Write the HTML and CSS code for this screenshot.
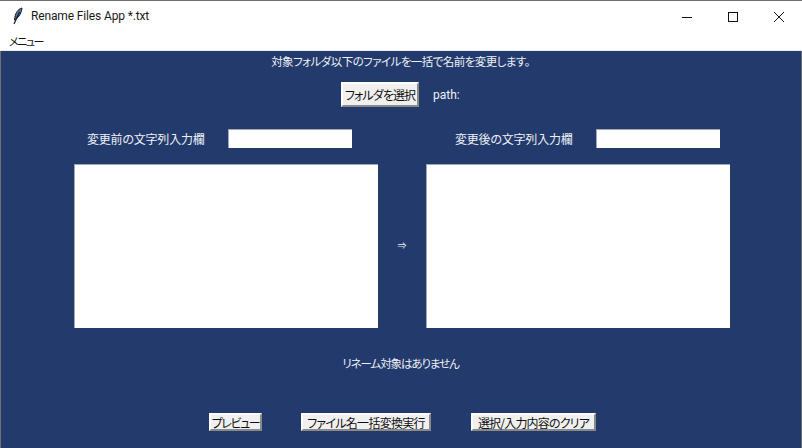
FILE: index.html
```html
<!DOCTYPE html>
<html lang="ja">
<head>
    <meta charset="UTF-8">
    <meta name="viewport" content="width=device-width, initial-scale=1.0">
    <title>Rename Files App *.txt</title>
    <link rel="stylesheet" href="styles.css">
</head>
<body>
    <div class="window">
        <div class="titlebar">
            <svg class="app-icon" width="16" height="20" viewBox="0 0 16 20">
                <path d="M12 2C8 3 5.500 7 5 11L4.500 14L6.500 12.500C9 11 11.500 7 12 2Z" fill="#5d7898" stroke="#111827" stroke-width="1"/>
                <path d="M9.500 6L4 18" stroke="#111827" stroke-width="1.200" fill="none"/>
            </svg>
            <span class="app-title">Rename Files App *.txt</span>
            <div class="window-controls">
                <svg width="12" height="12" viewBox="0 0 12 12"><path d="M1 6.500H11" stroke="#111" fill="none"/></svg>
                <svg width="12" height="12" viewBox="0 0 12 12"><rect x="1.500" y="1.500" width="9" height="9" stroke="#111" fill="none"/></svg>
                <svg width="12" height="12" viewBox="0 0 12 12"><path d="M1 1L11 11M11 1L1 11" stroke="#111" fill="none"/></svg>
            </div>
        </div>
        <div class="menubar">メニュー</div>

        <main class="content">
            <p class="lead">対象フォルダ以下のファイルを一括で名前を変更します。</p>

            <div class="folder-row">
                <button class="btn btn-folder">フォルダを選択</button>
                <span class="path-label">path:</span>
            </div>

            <div class="columns">
                <div class="input-row">
                    <label class="field-label">変更前の文字列入力欄</label>
                    <input class="field" type="text">
                </div>
                <div class="input-row">
                    <label class="field-label">変更後の文字列入力欄</label>
                    <input class="field" type="text">
                </div>
            </div>

            <div class="lists">
                <div class="listbox"></div>
                <span class="arrow">⇒</span>
                <div class="listbox"></div>
            </div>

            <p class="status">リネーム対象はありません</p>

            <div class="actions">
                <button class="btn btn-small">プレビュー</button>
                <button class="btn btn-small">ファイル名一括変換実行</button>
                <button class="btn btn-small">選択/入力内容のクリア</button>
            </div>
        </main>
    </div>
</body>
</html>
```

FILE: styles.css
```css
html {
    box-sizing: border-box;
}

*, *::before, *::after {
    box-sizing: inherit;
}

body {
    margin: 0;
    background: #233a6c;
    font-family: "Noto Sans CJK JP", "Liberation Sans", sans-serif;
    font-size: 12px;
    font-feature-settings: "palt" 1;
    overflow: hidden;
}

.window {
    width: 802px;
    height: 448px;
    display: flex;
    flex-direction: column;
    border-left: 1px solid #6f6f6f;
    border-right: 1px solid #6f6f6f;
}

.titlebar {
    height: 31px;
    flex: none;
    display: flex;
    align-items: center;
    background: white;
    border-top: 1px solid #6f6f6f;
    margin: 0 -1px;
    padding-left: 10px;
}

.app-icon {
    margin-right: 5px;
}

.app-title {
    font-family: Roboto, "Liberation Sans", sans-serif;
    font-size: 12px;
    letter-spacing: -0.14px;
    color: #1a1a1a;
}

.window-controls {
    margin-left: auto;
    display: flex;
    gap: 34px;
    padding-right: 17px;
    padding-top: 1px;
}

.window-controls svg {
    display: block;
}

.menubar {
    height: 20px;
    flex: none;
    background: white;
    border-bottom: 1px solid #e9edf7;
    margin: 0 -1px;
    padding-left: 9px;
    line-height: 20px;
    font-size: 11px;
    letter-spacing: -1.5px;
    color: #111;
}

.content {
    flex: 1;
    display: flex;
    flex-direction: column;
    align-items: center;
    color: #eef1f6;
    margin-left: -1px;
}

.lead {
    margin: 1px 0 0;
    height: 18px;
    line-height: 18px;
    font-size: 11.5px;
    letter-spacing: -0.55px;
}

.folder-row {
    margin-top: 12px;
    height: 25px;
    width: 100%;
    padding-left: 341px;
    display: flex;
    align-items: center;
}

.path-label {
    margin-left: 14px;
    font-family: Roboto, sans-serif;
}

.btn {
    background: #f0f0f0;
    color: #111;
    font-family: inherit;
    font-size: 12px;
    font-feature-settings: "palt" 1;
    padding: 0;
    border: 2px solid;
    border-color: #ffffff #8a8a8a #8a8a8a #ffffff;
    white-space: nowrap;
}

.btn-folder {
    width: 78px;
    height: 25px;
    letter-spacing: -0.9px;
}

.columns {
    margin-top: 22px;
    width: 100%;
    display: flex;
    height: 19px;
}

.input-row {
    flex: none;
    display: flex;
    align-items: center;
    width: 368px;
}

.input-row:first-child {
    margin-left: 87px;
}

.input-row:last-child {
    width: 265px;
}

.field-label {
    width: 141px;
    letter-spacing: -0.2px;
}

.field {
    width: 124px;
    height: 19px;
    background: white;
    border: none;
    border-top: 1px solid #a0a6b4;
    border-left: 1px solid #a0a6b4;
}

.lists {
    margin-top: 16px;
    width: 100%;
    padding-left: 74px;
    display: flex;
    align-items: center;
}

.listbox {
    width: 304px;
    height: 164px;
    background: white;
    border-top: 1px solid #a0a6b4;
    border-left: 1px solid #a0a6b4;
}

.arrow {
    width: 48px;
    margin-bottom: 2px;
    text-align: center;
    font-size: 9px;
}

.status {
    margin: 26px 0 0;
    height: 18px;
    line-height: 18px;
    font-size: 11.5px;
    letter-spacing: -1.1px;
}

.actions {
    margin-top: 41px;
    width: 100%;
    padding-left: 209px;
    display: flex;
}

.btn-small {
    height: 18px;
    line-height: 13px;
}

.btn-small:nth-child(1) {
    width: 53px;
    letter-spacing: -1.4px;
}

.btn-small:nth-child(2) {
    width: 130px;
    margin-left: 39px;
    letter-spacing: -0.7px;
}

.btn-small:nth-child(3) {
    width: 125px;
    margin-left: 40px;
    letter-spacing: -0.8px;
}
```
